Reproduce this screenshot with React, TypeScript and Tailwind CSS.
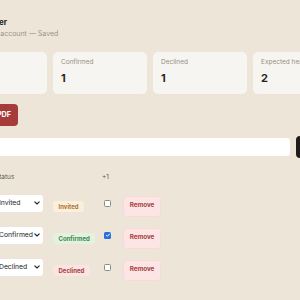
import React from "react";

const rows = [
  { name: "Anna Lee", status: "Invited", plusOne: false },
  { name: "Ben Cole", status: "Confirmed", plusOne: true },
  { name: "Cara Diaz", status: "Declined", plusOne: false },
];

const badgeCls: Record<string, string> = {
  Invited: "bg-[#fbefdc] text-[#a8782f]",
  Confirmed: "bg-[#e3f1e0] text-[#3e8748]",
  Declined: "bg-[#fbe4e2] text-[#a3423f]",
};

function Chevron() {
  return (
    <svg width="6" height="4" viewBox="0 0 6 4" fill="none">
      <path d="M0.8 0.8l2.2 2.2 2.2-2.2" stroke="#222" strokeWidth="1.1" strokeLinecap="round" strokeLinejoin="round" />
    </svg>
  );
}

export default function App() {
  return (
    <div
      className="w-[300px] h-[300px] overflow-hidden bg-[#ede5d8] flex justify-center text-[#2a2520]"
      style={{ fontFamily: "Inter, 'Noto Sans', sans-serif" }}
    >
      <div className="w-[394px] shrink-0 pt-[16px]">
        <h1 className="text-[8.1px] leading-[12px] font-bold whitespace-nowrap">RSVP Tracker</h1>
        <p className="text-[7px] leading-[10px] mt-[1px] text-[#9b948a] whitespace-nowrap">Synced to my account — Saved</p>

        <div className="grid grid-cols-4 gap-[6px] mt-[13px]">
          {[
            ["Invited", "1"],
            ["Confirmed", "1"],
            ["Declined", "1"],
            ["Expected headcount", "2"],
          ].map(([l, v]) => (
            <div key={l} className="bg-[#f7f5f1] rounded-[5px] h-[42px] px-[8px] pt-[6px]">
              <div className="text-[6.5px] leading-[8px] text-[#958e84] whitespace-nowrap">{l}</div>
              <div className="text-[11px] leading-[13px] font-bold mt-[6px]">{v}</div>
            </div>
          ))}
        </div>

        <div className="mt-[10px] flex">
          <button className="h-[22px] pl-[7px] pr-[7px] rounded-[4px] bg-[#a63b3b] text-white text-[7.2px] font-bold whitespace-nowrap">
            Download PDF
          </button>
        </div>

        <div className="mt-[10px] flex gap-[6px] items-center">
          <div className="flex-1 h-[18px] bg-white rounded-[3px] flex items-center px-[6px] text-[7px] text-[#aaa]">Guest name</div>
          <button className="w-[51px] h-[22px] rounded-[4px] bg-[#1e1b18] text-white text-[7px] font-bold">Add guest</button>
        </div>

        <div className="mt-[13px]">
          <div className="grid grid-cols-[42px_58px_49px_21px_1fr] items-center h-[14px] text-[6.5px] text-[#5f5850]">
            <div>Name</div>
            <div>Status</div>
            <div></div>
            <div>+1</div>
            <div></div>
          </div>
          {rows.map((r, i) => (
            <div
              key={r.name}
              className={`grid grid-cols-[42px_58px_49px_21px_1fr] items-center h-[32px] ${i === 0 ? "mt-[2px]" : ""}`}
            >
              <div className="text-[7px] overflow-hidden whitespace-nowrap">{r.name}</div>
              <div>
                <div className="w-[48px] h-[17px] bg-white rounded-[3px] flex items-center justify-between pl-[4px] pr-[3px] text-[6.8px] text-[#222]">
                  <span>{r.status}</span>
                  <Chevron />
                </div>
              </div>
              <div>
                <span className={`inline-flex items-center h-[11px] px-[5.5px] rounded-[3px] text-[6px] font-bold ${badgeCls[r.status]}`}>
                  {r.status}
                </span>
              </div>
              <div className="pl-[2px] flex">
                {r.plusOne ? (
                  <div className="w-[7px] h-[7px] rounded-[1.5px] bg-[#2a6fdb] flex items-center justify-center">
                    <svg width="6" height="6" viewBox="0 0 6 6">
                      <path d="M1.2 3.1l1.2 1.2L4.9 1.6" stroke="white" strokeWidth="1" fill="none" />
                    </svg>
                  </div>
                ) : (
                  <div className="w-[7px] h-[7px] rounded-[1.5px] border border-[#8a8a8a] bg-white" />
                )}
              </div>
              <div>
                <button className="w-[38px] h-[21px] rounded-[3px] bg-[#fce6e5] border border-[#f7d9d7] text-[#a8403e] text-[6.3px] font-bold">
                  Remove
                </button>
              </div>
            </div>
          ))}
        </div>
      </div>
    </div>
  );
}
